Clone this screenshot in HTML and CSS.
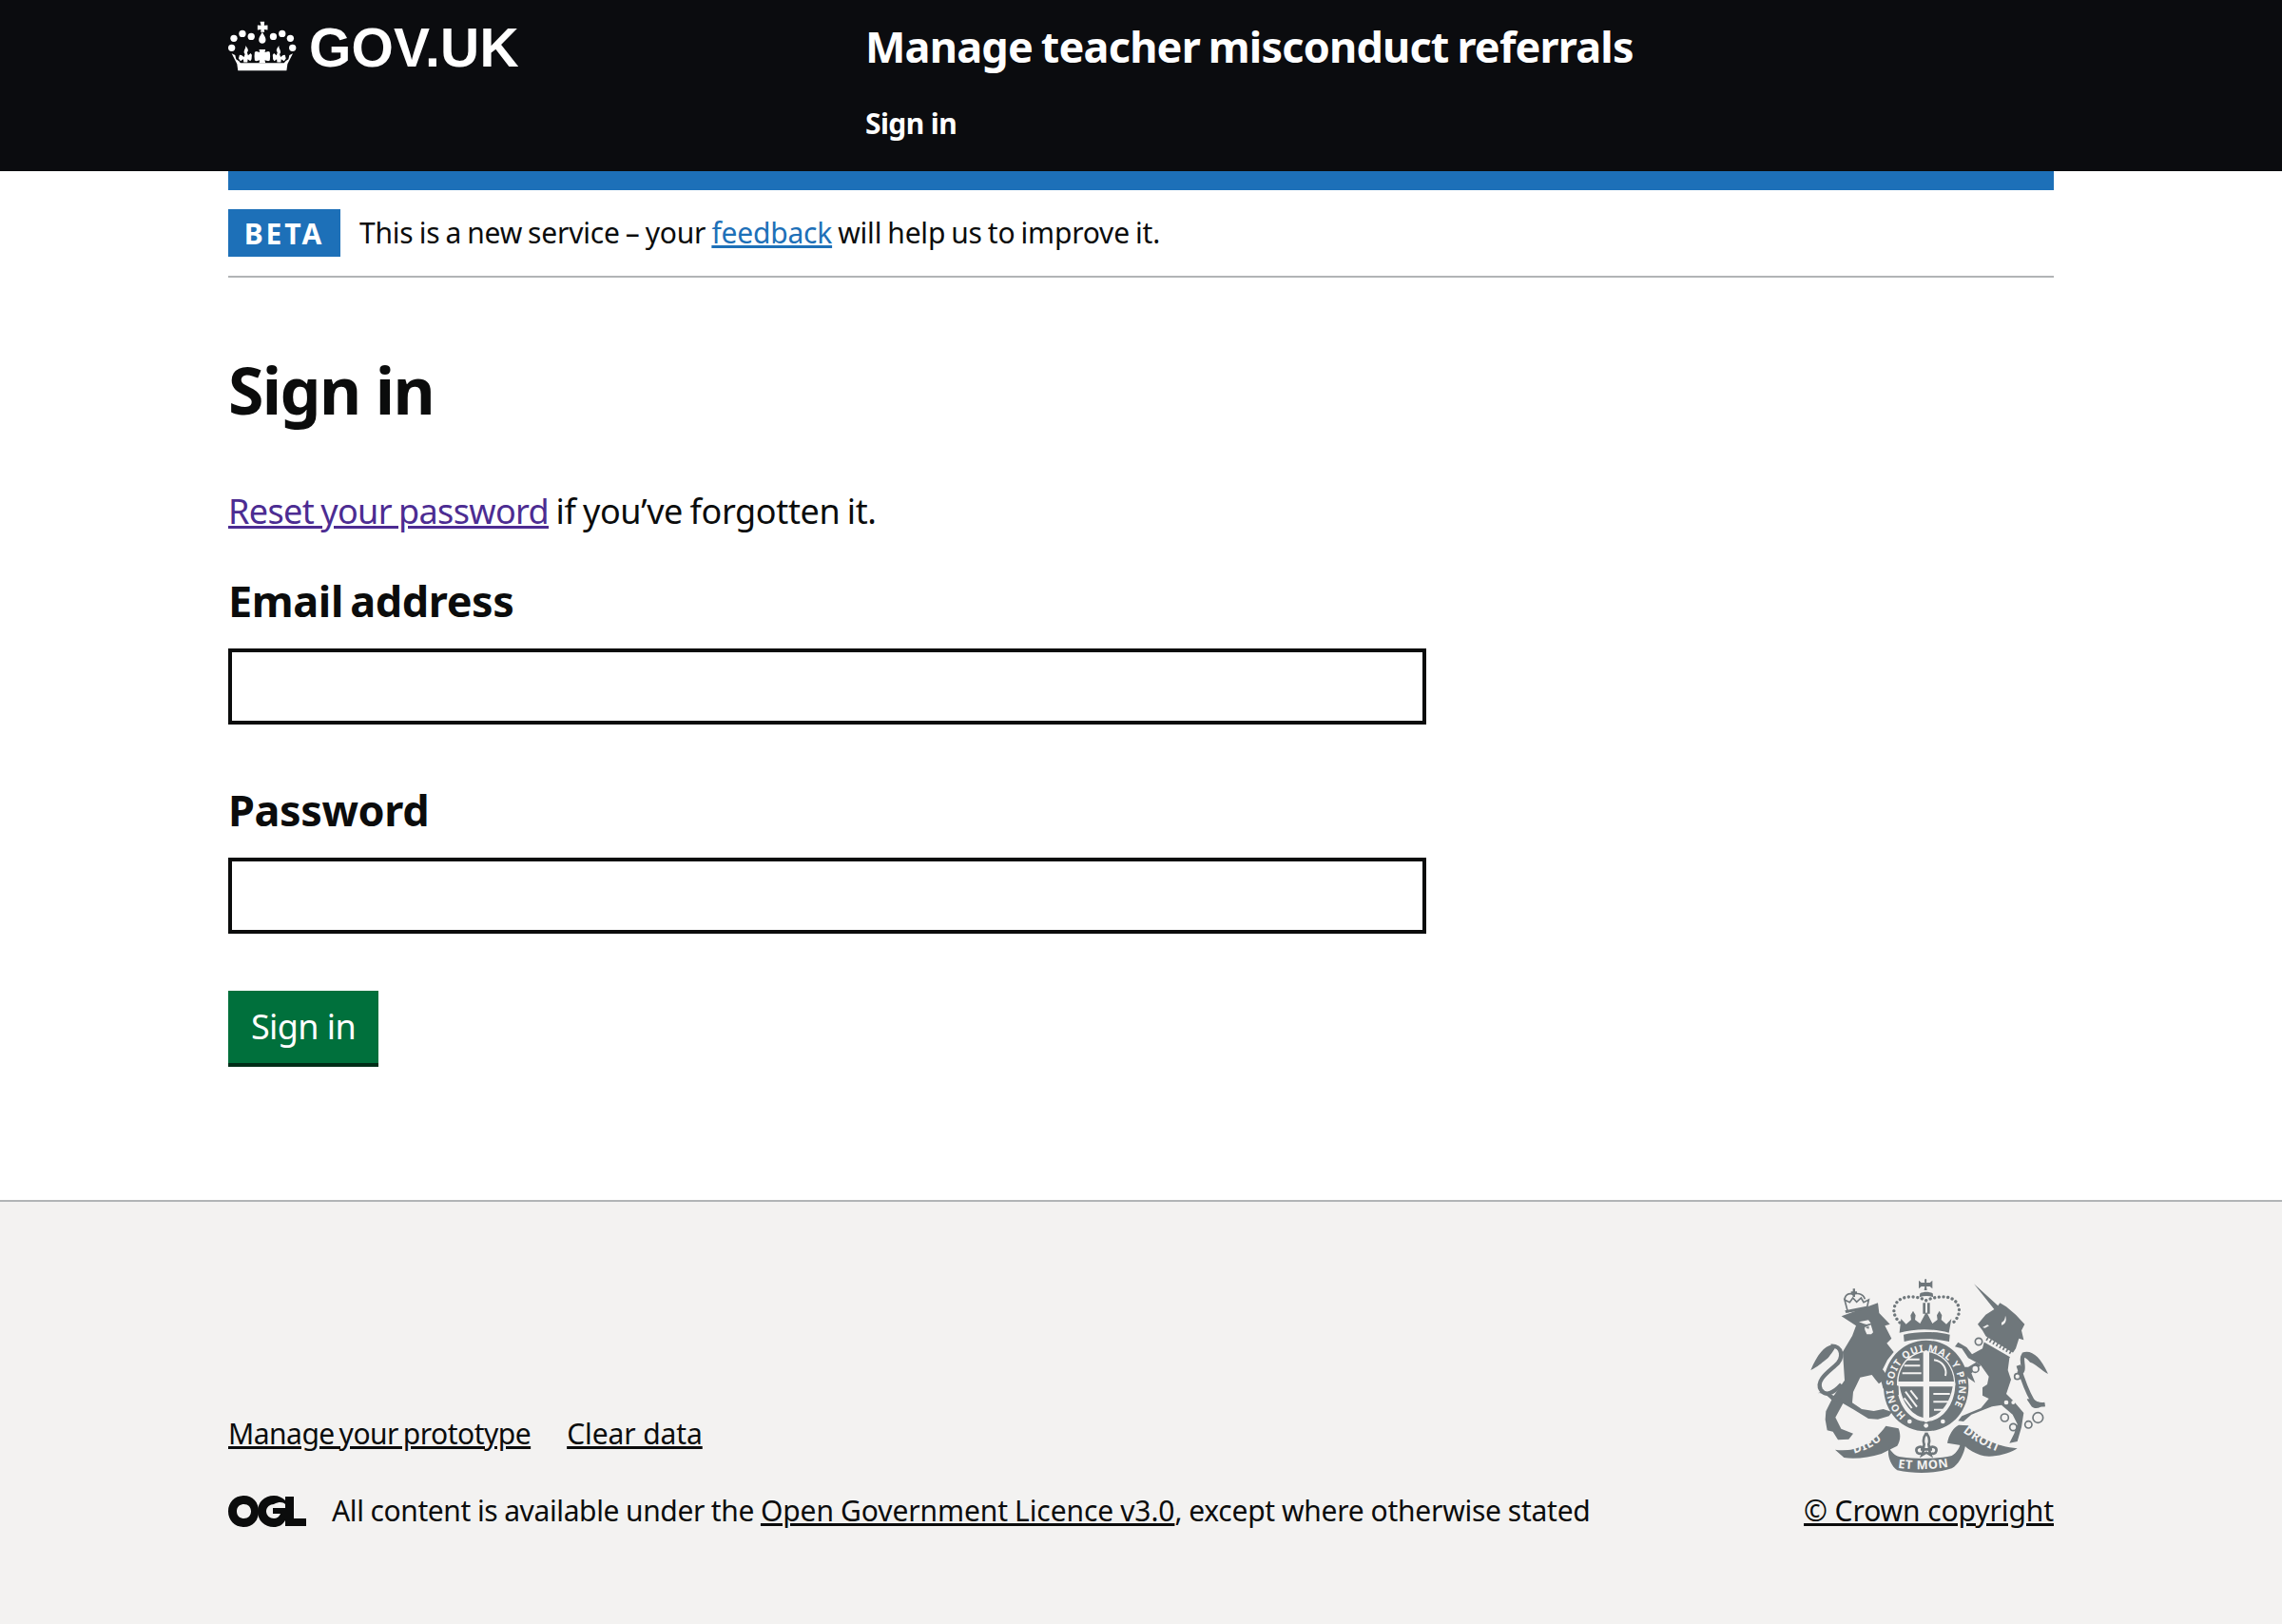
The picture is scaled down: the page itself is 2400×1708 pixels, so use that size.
FILE: index.html
```html
<!DOCTYPE html>
<html lang="en">
<head>
<meta charset="utf-8">
<title>Sign in - Manage teacher misconduct referrals</title>
<link rel="stylesheet" href="styles.css">
</head>
<body>
<header class="site-header">
  <div class="container header-inner">
    <a class="logo" href="#">
      <svg class="crown" viewBox="60 60 220 165" aria-hidden="true">
        <g fill="#fff">
          <circle cx="78" cy="118" r="11"/><circle cx="105" cy="103" r="11"/><circle cx="133" cy="112" r="11"/>
          <circle cx="203" cy="112" r="11"/><circle cx="231" cy="103" r="11"/><circle cx="257" cy="118" r="11"/>
          <circle cx="71" cy="148" r="11"/><circle cx="264" cy="148" r="11"/>
          <path d="M161 65h14l-1 12 11-1v15l-11-1 1 8h-12l1-8-11 1V76l11 1z"/>
          <path d="M168 98c7 12 11 18 11 25 0 7-5 11-11 11s-11-4-11-11c0-7 4-13 11-25z"/>
          <path d="M158 153h20l-2 9 11-3 5 2 1 14-1 13-5 2-11-3 2 9h-20l2-9-11 3-5-2-1-13 1-14 5-2 11 3z"/>
          <path d="M115 141c5 6 8 11 8 16l-3 6 3 9 8-7 4 5-1 14-4 6-8-6-1 10h-12l-1-10-9 6-6-8 3-12 6 1 8 6 3-9-3-5c0-6 2-10 5-16z"/>
          <path d="M221 141c-5 6-8 11-8 16l3 6-3 9-8-7-4 5 1 14 4 6 8-6 1 10h12l1-10 9 6 6-8-3-12-6 1-8 6-3-9 3-5c0-6-2-10-5-16z"/>
          <path d="M71 166l11 5 3 13 9 6 5 6h138l5-6 9-6 3-13 11-5-17 33-3 21H91l-3-21z"/>
        </g>
      </svg>
      <span class="logo-text">GOV.UK</span>
    </a>
    <div class="service">
      <a class="service-name" href="#">Manage teacher misconduct referrals</a>
      <nav><a class="nav-link" href="#">Sign in</a></nav>
    </div>
  </div>
</header>

<div class="container">
  <div class="blue-bar"></div>
  <div class="phase-banner">
    <strong class="tag">BETA</strong>
    <span class="phase-text">This is a new service – your <a class="link" href="#">feedback</a> will help us to improve it.</span>
  </div>

  <main class="main">
    <h1 class="title">Sign in</h1>
    <p class="body-text"><a class="link visited" href="#">Reset your password</a> if you’ve forgotten it.</p>
    <form>
      <div class="form-group">
        <label class="label" for="email">Email address</label>
        <input class="input" id="email" type="text">
      </div>
      <div class="form-group">
        <label class="label" for="password">Password</label>
        <input class="input" id="password" type="password">
      </div>
      <button class="button" type="button">Sign in</button>
    </form>
  </main>
</div>

<footer class="footer">
  <div class="container footer-inner">
    <div class="footer-meta">
      <ul class="footer-links">
        <li><a class="footer-link" href="#">Manage your prototype</a></li>
        <li><a class="footer-link" href="#">Clear data</a></li>
      </ul>
      <div class="licence">
        <svg class="ogl" viewBox="0 0 82 33" aria-hidden="true">
          <path fill="#0b0c0c" fill-rule="evenodd" d="M16.500 0C26 0 32 7 32 16.500S26 33 16.500 33 0 26 0 16.500 7 0 16.500 0zm0 9C12 9 9 12 9 16.500S12 24 16.500 24 24 21 24 16.500 21 9 16.500 9z"/>
          <path fill="#0b0c0c" d="M48 0c5 0 9 2 12 5V1h9v23h13v8H60v-6c-3 5-7 7-12 7-10 0-17-7-17-16.500S38 0 48 0zm0 9c-4 0-8 3-8 7.500s4 7.500 8 7.500c3 0 6-2 7-5h-8v-6h13V9c-2-2-6-3-12 0z"/>
        </svg>
        <span class="licence-text"><span class="licence-lead">All content is available under the </span><a class="footer-link licence-link" href="#">Open Government Licence v3.0</a>, except where otherwise stated</span>
      </div>
    </div>
    <div class="copyright">
      <svg class="crest" viewBox="60 30 780 630" aria-hidden="true">
        <defs>
          <path id="garter" d="M374 473A104 112 0 1 1 500 473"/>
          <path id="scroll-left" d="M205 594Q270 580 318 530"/>
          <path id="scroll-right" d="M552 524Q600 565 680 594"/>
          <path id="scroll-mid" d="M348 638Q435 650 525 632"/>
        </defs>
        <g class="crest-ink">
          <!-- lion, drawn in the coordinates of its own region -->
          <g transform="translate(45 30)">
            <path d="M125 130L240 88 244 120 278 155 262 160 283 200 268 215 290 243 270 268 255 298 272 320 305 350 306 378 276 377 256 357 251 337 243 343 233 331 221 315 184 323 162 369 159 403 189 423 227 429 257 423 285 432 275 445 240 455 210 453 165 425 130 405 106 449 124 485 162 500 148 518 114 520 98 494 80 490 74 456 76 430 100 382 135 332 129 242 159 192 171 160z"/>
            <path class="crest-line" d="M125 345C100 372 75 385 60 362 44 335 78 310 104 287 135 262 128 222 92 224"/>
            <path d="M96 220C70 225 50 250 28 300 50 290 62 278 75 268 85 262 95 245 104 232zM45 374C60 368 78 378 92 392 105 400 120 396 125 390L100 380 70 366z"/>
            <path class="crest-paper" d="M180 148l30-6 8 10-14 4-8-2zM198 165l20-8 7 24-6 6-14 0-6-14z"/>
            <path d="M200 165l12-3-1 8z"/>
            <path class="crest-thin" d="M135 78l16 8 10-14 12 13 14-13 8 14 16-8-6 28-60 10zM135 78c2-22 22-22 28-15 6-7 30-7 36 13"/>
            <path d="M136 112l68-14 3 8-68 14zM155 52h6v-9h7v9h6v7h-6v10h-7V59h-6z"/>
          </g>

          <!-- unicorn, drawn in the coordinates of its own region -->
          <g transform="translate(420 30)">
            <path d="M168 28L244 97 250 88 270 100 300 125 328 155 318 175 325 205 310 200 300 232 280 262 275 300 285 330 270 375 295 400 325 435 318 480 305 525 280 530 295 500 305 470 290 440 255 410 225 415 160 440 135 462 118 460 130 445 190 420 215 390 195 380 195 355 210 345 215 320 190 285 175 275 150 262 130 232 108 226 118 212 145 228 162 250 195 232 205 192 195 175 180 155 205 125 232 108z"/>
            <path d="M190 285L160 310 172 340 150 325 128 290 150 290 175 275z"/>
            <path class="crest-line" d="M305 310C345 310 300 250 335 250M308 285C325 340 340 375 352 395 365 410 380 410 392 408"/>
            <path d="M320 245C350 235 375 255 402 312 380 300 362 280 345 275 335 262 325 258 318 258zM335 392C345 385 370 405 392 405 380 420 360 425 350 415z"/>
            <path class="crest-paper" d="M204 192l90 55-8 14-90-52zM195 165l15-8 6 3-13 7z"/>
            <path class="crest-paper" d="M255 150c8-4 12-12 12-22 6 14 0 28-12 30z"/>
            <path class="crest-dash" d="M208 200l80 46"/>
            <g class="crest-ring">
              <circle cx="183" cy="210" r="11"/><circle cx="172" cy="296" r="11"/><circle cx="305" cy="320" r="9"/>
              <circle cx="265" cy="450" r="12"/><circle cx="292" cy="480" r="11"/><circle cx="340" cy="472" r="11"/><circle cx="370" cy="450" r="16"/>
            </g>
            <g class="crest-paper">
              <circle cx="297" cy="368" r="8"/><circle cx="270" cy="402" r="7"/><circle cx="292" cy="402" r="6"/>
            </g>
          </g>

          <!-- crown above the shield -->
          <path d="M437 42c3 6 1 10 1 12h11l8-7v26l-8-7h-11l2 12h-9l2-12h-11l-8 7V47l8 7h11c0-2-2-6 1-12zM418 88c12-6 28-6 40 0l2 12c-14-5-30-5-44 0z"/>
          <path d="M427 118h8v34h-8zM441 118h8v34h-8z"/>
          <path class="crest-dots" d="M437 110C400 92 345 92 336 135c-3 24 12 40 26 52M437 110C480 92 532 92 541 135c3 24-12 40-26 52"/>
          <path d="M358 168l16 17 16-14-2-14 8-14 8 14-2 14 16 12 18-34 3-1 18 35 16-12-2-14 8-14 8 14-2 14 16 14 16-17-8 44c-48-14-106-14-156 0z"/>
          <path d="M366 218c40-11 106-11 146 0l-2 22c-42-11-100-11-142 0z"/>

          <!-- garter and shield -->
          <path fill-rule="evenodd" d="M437 236c76 0 134 64 134 145 0 82-58 142-134 142s-134-60-134-142c0-81 58-145 134-145zm0 34c-52 0-92 46-92 104 0 62 40 118 92 118s92-56 92-118c0-58-40-104-92-104z"/>
          <path d="M350 366h78v-92c-44 8-76 44-78 92zM447 274v92h78c-3-48-34-84-78-92zM354 382h74v98c-36-8-66-46-74-98zM447 382h74c-8 52-38 90-74 98z"/>
          <g class="crest-stripe">
            <path d="M368 316h50M362 340h60M378 296h38"/>
            <path d="M462 298c28 4 42 28 36 50"/>
            <path d="M372 398l36 48M388 394l22 28M368 418l24 32"/>
            <path d="M460 405h52M460 430h52M462 455h38"/>
          </g>
          <path class="crest-paper-stroke" d="M345 374h184M437 268v226"/>
          <circle class="crest-paper" cx="385" cy="492" r="7"/><circle class="crest-paper" cx="437" cy="505" r="7"/><circle class="crest-paper" cx="490" cy="492" r="7"/>

          <!-- motto ribbons -->
          <path d="M150 581c50 8 112-8 160-75l40 8c8 20 6 40-4 55l-50 25c-40 12-85 18-118 12z"/>
          <path d="M318 570c8 18 22 32 40 34 50 8 120 6 160-4 12-6 24-22 28-40l16 4c-4 24-18 62-44 76-60 18-115 18-172 6-20-14-30-44-28-62z"/>
          <path d="M504 560c4-25 20-50 36-57l30 2c30 38 90 66 155 72-30 18-70 28-105 24-20-4-48-18-60-32z"/>
          <path class="crest-fleur" d="M438 528c10 14 12 24 7 36l2 12c8-8 26-4 22 10-2 8-12 10-14 4M438 528c-10 14-12 24-7 36l-2 12c-8-8-26-4-22 10 2 8 12 10 14 4M420 580h36M430 580l-6 18 14-8 14 8-6-18"/>
        </g>
        <g class="crest-text">
          <text><textPath href="#garter" textLength="500">HONI SOIT QUI MAL Y PENSE</textPath></text>
          <text class="crest-motto"><textPath href="#scroll-left" startOffset="4%">DIEU</textPath></text>
          <text class="crest-motto"><textPath href="#scroll-right" startOffset="1%">DROIT</textPath></text>
          <text class="crest-motto"><textPath href="#scroll-mid">ET MON</textPath></text>
        </g>
      </svg>
      <a class="footer-link" href="#">© Crown copyright</a>
    </div>
  </div>
</footer>
</body>
</html>
```
FILE: styles.css
```css
* { box-sizing: border-box; }
html, body { margin: 0; padding: 0; }
body {
  font-family: "Noto Sans", Arial, sans-serif;
  color: #0b0c0c;
  background: #fff;
}
.container { width: 1920px; margin: 0 auto; }

.site-header { background: #0b0c0f; height: 180px; color: #fff; }
.header-inner { display: flex; align-items: flex-start; }
.logo {
  display: flex; align-items: center; gap: 12px;
  width: 671px; height: 100px; color: #fff; text-decoration: none;
}
.crown { width: 73px; height: 55px; display: block; margin-top: -4px; }
.logo-text {
  font-family: "Liberation Sans", Arial, sans-serif;
  font-weight: 700; font-size: 57px; line-height: 100px; letter-spacing: 0.2px;
}
.service { display: flex; flex-direction: column; }
.service-name {
  color: #fff; text-decoration: none; font-weight: 700;
  font-size: 45px; line-height: 60px; margin-top: 19px; margin-left: -1px;
  letter-spacing: -0.82px; word-spacing: -2px;
}
.nav-link {
  display: block; color: #fff; text-decoration: none; font-weight: 700;
  font-size: 30px; line-height: 40px; margin-top: 31px; margin-left: -1px;
  letter-spacing: -0.6px;
}

.blue-bar { height: 20px; background: #1d70b8; }
.phase-banner {
  display: flex; align-items: center; gap: 20px;
  height: 92px;
  border-bottom: 2px solid #b1b4b6;
}
.tag {
  display: block; width: 118px; height: 50px; padding-top: 1px; background: #1d70b8; color: #fff;
  font-size: 30px; line-height: 50px; text-align: center; letter-spacing: 3px;
}
.phase-text { font-size: 30px; line-height: 40px; letter-spacing: -0.2px; word-spacing: -1.5px; }
.link { color: #1d70b8; }
.link.visited { color: #4c2c92; letter-spacing: -0.65px; }

.main { padding-top: 73px; padding-bottom: 140px; }
.title { margin: 0 0 58px; font-size: 68px; line-height: 90px; font-weight: 700; letter-spacing: -1.6px; }
.body-text { margin: 0 0 39px; font-size: 36px; line-height: 50px; letter-spacing: -0.37px; word-spacing: -1.5px; }
.form-group { margin-bottom: 60px; }
.label {
  display: block; font-weight: 700; font-size: 45px; line-height: 60px; margin-bottom: 20px;
  letter-spacing: -0.4px; word-spacing: -4px;
}
.input {
  display: block; width: 1260px; height: 80px; background: #fff;
  border: 4px solid #0b0c0c; border-radius: 0; padding: 8px; font: inherit; outline: none;
}
.button {
  display: block; width: 158px; height: 76px; padding: 0;
  background: #00703c; color: #fff; border: 0; border-radius: 0;
  box-shadow: 0 4px 0 #002d18; font-family: inherit; font-size: 36px; line-height: 1;
  letter-spacing: -0.6px; margin-bottom: 4px;
}

.footer { background: #f3f2f1; border-top: 2px solid #b1b4b6; height: 446px; }
.footer-inner { display: flex; justify-content: space-between; align-items: flex-end; padding-top: 77px; }
.footer-meta { display: flex; flex-direction: column; }
.footer-links {
  display: flex; gap: 38px; list-style: none; margin: 0 0 41px; padding: 0;
  font-size: 30px; line-height: 40px; letter-spacing: -0.5px; word-spacing: -2.500px;
}
.footer-links li:last-child { letter-spacing: -0.1px; word-spacing: 0; }
.footer-link { color: #0b0c0c; }
.licence { display: flex; align-items: center; gap: 27px; }
.ogl { width: 82px; height: 33px; display: block; }
.licence-text { font-size: 30px; line-height: 40px; letter-spacing: -0.25px; word-spacing: -0.5px; }
.licence-lead { letter-spacing: -0.38px; }
.licence-link { letter-spacing: -0.1px; }
.copyright { display: flex; flex-direction: column; align-items: flex-end; font-size: 30px; line-height: 40px; letter-spacing: -0.1px; }
.crest { width: 260px; height: 210px; display: block; margin-bottom: 18px; }
.crest-ink { fill: #6f777b; }
.crest-line { fill: none; stroke: #6f777b; stroke-width: 13; }
.crest-thin { fill: none; stroke: #6f777b; stroke-width: 5; }
.crest-ring { fill: #f3f2f1; stroke: #6f777b; stroke-width: 5; }
.crest-paper { fill: #f3f2f1; }
.crest-paper-stroke { fill: none; stroke: #f3f2f1; stroke-width: 9; }
.crest-stripe { fill: none; stroke: #f3f2f1; stroke-width: 6; }
.crest-dash { fill: none; stroke: #6f777b; stroke-width: 12; stroke-dasharray: 5 7; }
.crest-dots { fill: none; stroke: #6f777b; stroke-width: 10; stroke-dasharray: 0.1 14; stroke-linecap: round; }
.crest-fleur { fill: none; stroke: #6f777b; stroke-width: 8; }
.crest-text { fill: #f3f2f1; font-family: "Noto Sans", Arial, sans-serif; font-weight: 700; font-size: 31px; }
.crest-motto { font-size: 38px; letter-spacing: 2px; }
```
